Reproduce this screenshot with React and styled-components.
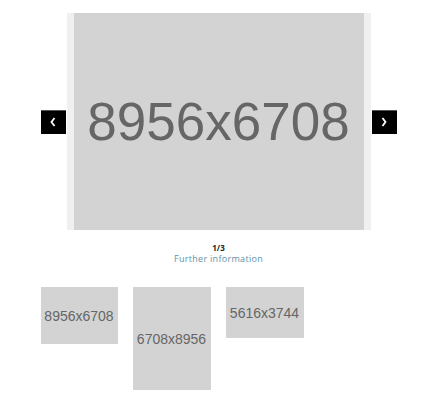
import React, { useState } from 'react';
import styled, { createGlobalStyle } from 'styled-components';

const GlobalStyle = createGlobalStyle`
    body {
        margin: 0;
        background: #fff;
        font-family: "Liberation Sans", Arial, sans-serif;
    }
`;

const Gallery = styled.div`
    width: 356px;
    margin: 0 auto;
    padding-top: 13px;
`;

const Slider = styled.div`
    display: flex;
    align-items: center;
    gap: 1px;
`;

const NavButton = styled.button`
    width: 25px;
    height: 24px;
    padding: 0;
    border: none;
    border-top: 1px solid #555;
    background: #000;
    display: flex;
    align-items: center;
    justify-content: center;
    cursor: pointer;
`;

const Frame = styled.div`
    width: 304px;
    height: 217px;
    background: #f0f0f0;
    display: flex;
    justify-content: center;
`;

const Placeholder = styled.div`
    width: ${(p) => p.$w}px;
    height: ${(p) => p.$h}px;
    background: #d3d3d3;
    color: #666;
    font-size: ${(p) => p.$size}px;
    display: flex;
    align-items: center;
    justify-content: center;
    flex-shrink: 0;
`;

const Caption = styled.div`
    margin-top: 13px;
    text-align: center;
    font-family: "Open Sans", sans-serif;
`;

const Counter = styled.div`
    font-size: 8px;
    font-weight: 700;
    color: #222;
    line-height: 10px;
`;

const InfoLink = styled.a`
    display: block;
    font-size: 9px;
    letter-spacing: 0.3px;
    color: #5e93a9;
    line-height: 12px;
    text-decoration: none;
`;

const Thumbs = styled.div`
    display: flex;
    align-items: flex-start;
    gap: 15px;
    margin-top: 22px;
`;

const Chevron = ({ dir }) => (
    <svg width="8" height="12" viewBox="0 0 8 12">
        <polyline
            points={dir === 'left' ? '5.5,2 2.5,6 5.5,10' : '2.5,2 5.5,6 2.5,10'}
            fill="none"
            stroke="#fff"
            strokeWidth="1.8"
        />
    </svg>
);

const images = [
    { label: '8956x6708', tw: 77, th: 57 },
    { label: '6708x8956', tw: 78, th: 103 },
    { label: '5616x3744', tw: 78, th: 51 },
];

export default function App() {
    const [index, setIndex] = useState(0);
    const count = images.length;

    return (
        <Gallery>
            <GlobalStyle />
            <Slider>
                <NavButton onClick={() => setIndex((index + count - 1) % count)}>
                    <Chevron dir="left" />
                </NavButton>
                <Frame>
                    <Placeholder $w={290} $h={217} $size={53}>
                        {images[index].label}
                    </Placeholder>
                </Frame>
                <NavButton onClick={() => setIndex((index + 1) % count)}>
                    <Chevron dir="right" />
                </NavButton>
            </Slider>
            <Caption>
                <Counter>{index + 1}/{count}</Counter>
                <InfoLink href="#">Further information</InfoLink>
            </Caption>
            <Thumbs>
                {images.map((img, i) => (
                    <Placeholder
                        key={img.label}
                        $w={img.tw}
                        $h={img.th}
                        $size={14}
                        onClick={() => setIndex(i)}
                    >
                        {img.label}
                    </Placeholder>
                ))}
            </Thumbs>
        </Gallery>
    );
}
